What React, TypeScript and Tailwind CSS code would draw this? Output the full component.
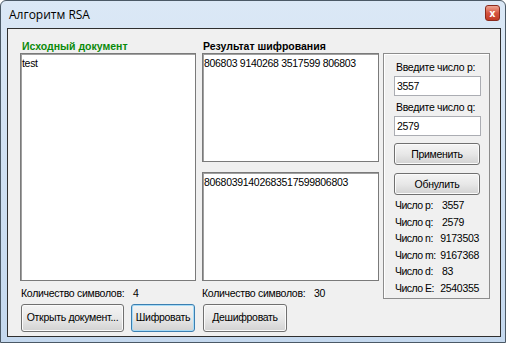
import React from 'react';

// Окно "Алгоритм RSA" в стиле Windows 7
const font = { fontFamily: '"Liberation Sans", Arial, sans-serif' };

const Btn = ({ label, w, focused }: { label: string; w: string; focused?: boolean }) => (
    <div
        className={`${w} h-[28px] rounded-[3px] border flex items-center justify-center whitespace-nowrap text-[10.5px] text-black bg-gradient-to-b from-[#f4f4f4] via-[#e8e8e8] to-[#d2d2d2] ${
            focused ? 'border-[#3c7fb1] shadow-[inset_0_0_0_1px_#a8dcf7]' : 'border-[#707070] shadow-[inset_0_0_0_1px_#fbfbfb]'
        }`}
    >
        {label}
    </div>
);

const SmallBtn = ({ label }: { label: string }) => (
    <div className="mx-auto w-[86px] h-[22px] rounded-[3px] border border-[#707070] shadow-[inset_0_0_0_1px_#fbfbfb] flex items-center justify-center text-[10.5px] text-black bg-gradient-to-b from-[#f4f4f4] via-[#e8e8e8] to-[#d2d2d2]">
        {label}
    </div>
);

const TextBox = ({ h, text }: { h: string; text?: string }) => (
    <div className={`${h} w-full bg-white border border-[#7a7a7a] shadow-[inset_1px_1px_0_#a0a0a0] pl-[1px] pt-[3px] text-[10.5px] leading-[13px] text-black whitespace-nowrap`}>
        {text}
    </div>
);

const stats = [
    ['Число p:', '3557'],
    ['Число q:', '2579'],
    ['Число n:', '9173503'],
    ['Число m:', '9167368'],
    ['Число d:', '83'],
    ['Число E:', '2540355'],
];

export default function App() {
    return (
        <div style={font} className="w-[506px] h-[343px] flex flex-col border border-[#4b5966] rounded-t-[6px] bg-gradient-to-b from-[#dbe8f6] via-[#cfe0f2] to-[#c4d8ee] overflow-hidden">
            {/* Заголовок */}
            <div className="h-[27px] flex items-center pl-[8px] pr-[5px]" style={{ fontFamily: '"Open Sans", "Liberation Sans", sans-serif' }}>
                <span className="text-[12px] text-black leading-none mt-[1px]">Алгоритм RSA</span>
                <div className="ml-auto mt-[-3px] w-[15px] h-[16px] rounded-[3px] border border-[#8a2a1d] bg-gradient-to-b from-[#eca391] via-[#d6543f] to-[#c13a24] flex items-center justify-center text-white text-[10px] font-bold leading-none">
                    x
                </div>
            </div>

            {/* Клиентская область */}
            <div className="ml-[6px] w-[494px] h-[309px] border border-[#2f2f2f] bg-[#f0f0f0] flex flex-col whitespace-nowrap tracking-[-0.3px]">
                <div className="flex pt-[10px] pl-[12px]">
                    {/* Исходный документ */}
                    <div className="w-[176px] flex flex-col">
                        <div className="h-[14px] text-[10.5px] leading-[14px] font-bold tracking-normal text-[#0a8a0a] pl-[2px]">Исходный документ</div>
                        <TextBox h="h-[228px]" text="test" />
                        <div className="mt-[5px] h-[14px] flex text-[10.5px] leading-[14px] text-black pl-[1px]">
                            <span className="w-[112px]">Количество символов:</span>
                            <span>4</span>
                        </div>
                    </div>

                    {/* Результат шифрования */}
                    <div className="ml-[6px] w-[177px] flex flex-col">
                        <div className="h-[14px] text-[10.5px] leading-[14px] font-bold tracking-normal text-black pl-[1px]">Результат шифрования</div>
                        <TextBox h="h-[109px]" text="806803 9140268 3517599 806803" />
                        <div className="mt-[10px]">
                            <TextBox h="h-[109px]" text="80680391402683517599806803" />
                        </div>
                        <div className="mt-[5px] h-[14px] flex text-[10.5px] leading-[14px] text-black">
                            <span className="w-[112px]">Количество символов:</span>
                            <span>30</span>
                        </div>
                    </div>

                    {/* Параметры */}
                    <div className="ml-[4px] mt-[14px] w-[107px] h-[246px] border border-[#8c8c8c] shadow-[inset_1px_1px_0_#ffffff] flex flex-col px-[10px] text-[10.5px] leading-[14px] text-black">
                        <div className="mt-[6px] h-[14px] pl-[2px]">Введите число p:</div>
                        <div className="mt-[2px] h-[20px] w-[87px] bg-white border border-[#abadb3] pl-[2px] flex items-center">3557</div>
                        <div className="mt-[4px] h-[14px] pl-[2px]">Введите число q:</div>
                        <div className="mt-[2px] h-[20px] w-[87px] bg-white border border-[#abadb3] pl-[2px] flex items-center">2579</div>
                        <div className="mt-[7px]">
                            <SmallBtn label="Применить" />
                        </div>
                        <div className="mt-[8px]">
                            <SmallBtn label="Обнулить" />
                        </div>
                        <div className="mt-[2px] flex flex-col">
                            {stats.map(([k, v]) => (
                                <div key={k} className="h-[16.5px] flex items-center pl-[1px]">
                                    <span className="w-[47px] tracking-[-0.5px]">{k}</span>
                                    <span>{v}</span>
                                </div>
                            ))}
                        </div>
                    </div>
                </div>

                {/* Кнопки */}
                <div className="flex mt-[4px] pl-[13px]">
                    <Btn label="Открыть документ..." w="w-[103px]" />
                    <div className="ml-[7px]">
                        <Btn label="Шифровать" w="w-[64px]" focused />
                    </div>
                    <div className="ml-[8px]">
                        <Btn label="Дешифровать" w="w-[84px]" />
                    </div>
                </div>
            </div>
        </div>
    );
}
